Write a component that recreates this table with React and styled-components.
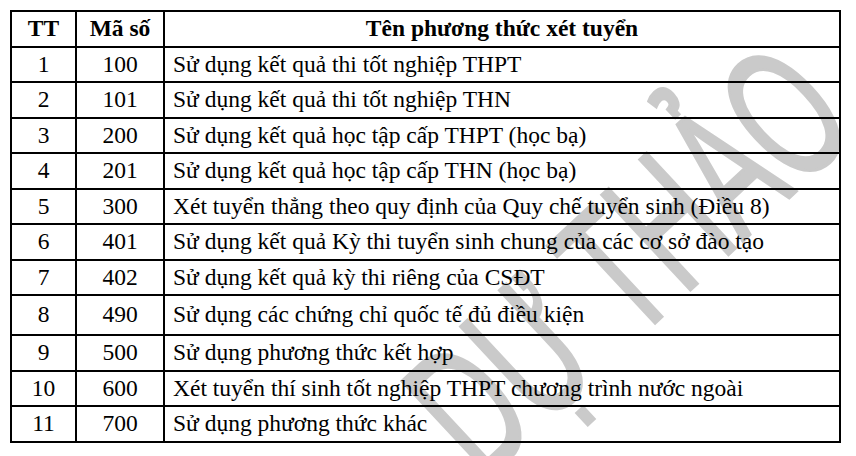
import React from 'react';
import styled, { createGlobalStyle } from 'styled-components';

const GlobalStyle = createGlobalStyle`
  html, body {
    margin: 0;
    padding: 0;
    background: #fff;
  }
`;

const rows = [
    { tt: 1, code: 100, name: 'Sử dụng kết quả thi tốt nghiệp THPT' },
    { tt: 2, code: 101, name: 'Sử dụng kết quả thi tốt nghiệp THN' },
    { tt: 3, code: 200, name: 'Sử dụng kết quả học tập cấp THPT (học bạ)' },
    { tt: 4, code: 201, name: 'Sử dụng kết quả học tập cấp THN (học bạ)' },
    { tt: 5, code: 300, name: 'Xét tuyển thẳng theo quy định của Quy chế tuyển sinh (Điều 8)' },
    { tt: 6, code: 401, name: 'Sử dụng kết quả Kỳ thi tuyển sinh chung của các cơ sở đào tạo' },
    { tt: 7, code: 402, name: 'Sử dụng kết quả kỳ thi riêng của CSĐT' },
    { tt: 8, code: 490, name: 'Sử dụng các chứng chỉ quốc tế đủ điều kiện', tall: true },
    { tt: 9, code: 500, name: 'Sử dụng phương thức kết hợp' },
    { tt: 10, code: 600, name: 'Xét tuyển thí sinh tốt nghiệp THPT chương trình nước ngoài' },
    { tt: 11, code: 700, name: 'Sử dụng phương thức khác' },
];

const App = () => {
    return (
        <>
            <GlobalStyle />
            <Page>
                <Watermark>DỰ THẢO</Watermark>
                <Table>
                    <colgroup>
                        <col style={{ width: 65 }} />
                        <col style={{ width: 88 }} />
                        <col />
                    </colgroup>
                    <thead>
                        <Row>
                            <HeadCell>TT</HeadCell>
                            <HeadCell>Mã số</HeadCell>
                            <HeadCell>Tên phương thức xét tuyển</HeadCell>
                        </Row>
                    </thead>
                    <tbody>
                        {rows.map((r) => (
                            <Row key={r.code} $tall={r.tall}>
                                <Cell $center>{r.tt}</Cell>
                                <Cell $center>{r.code}</Cell>
                                <Cell>{r.name}</Cell>
                            </Row>
                        ))}
                    </tbody>
                </Table>
            </Page>
        </>
    );
};

export default App;

// Styled components
const Page = styled.div`
    position: relative;
    width: 856px;
    height: 456px;
    padding: 10px 0 0 10px;
    box-sizing: border-box;
    overflow: hidden;
    background: #fff;
`;

// diagonal watermark, like the WordArt one of the document
const Watermark = styled.div`
    position: absolute;
    left: 628px;
    top: 260px;
    transform: translate(-50%, -50%) rotate(-43deg) scale(0.77, 1.3);
    font-family: "Liberation Sans", Arial, sans-serif;
    font-size: 145px;
    line-height: 1;
    color: #cacaca;
    -webkit-text-stroke: 2.5px #cacaca;
    white-space: nowrap;
    z-index: 0;
    pointer-events: none;
`;

const Table = styled.table`
    position: relative;
    z-index: 1;
    width: 831px;
    border-collapse: collapse;
    table-layout: fixed;
    font-family: "Liberation Serif", "Times New Roman", serif;
    font-size: 23.5px;
    color: #000;
    background: transparent;
`;

const Row = styled.tr`
    height: ${(p) => (p.$tall ? '40px' : '35.5px')};
`;

const HeadCell = styled.th`
    border: 2px solid #000;
    padding: 0;
    font-weight: bold;
    text-align: center;
    line-height: 1;
`;

const Cell = styled.td`
    border: 2px solid #000;
    padding: ${(p) => (p.$center ? '0' : '0 0 0 8px')};
    text-align: ${(p) => (p.$center ? 'center' : 'left')};
    line-height: 1;
    white-space: nowrap;
`;
